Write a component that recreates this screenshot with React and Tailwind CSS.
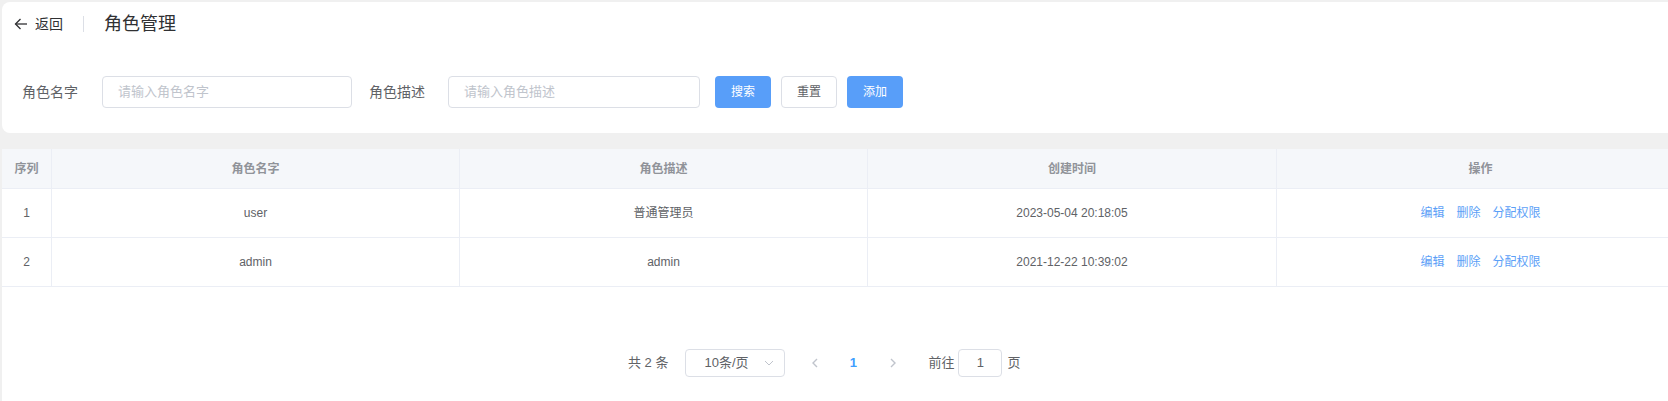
import React from "react";

const rows = [
  { id: 1, name: "user", desc: "普通管理员", time: "2023-05-04 20:18:05" },
  { id: 2, name: "admin", desc: "admin", time: "2021-12-22 10:39:02" },
];

function Cell({ children, className = "" }) {
  return (
    <div className={"flex items-center justify-center border-r border-b border-[#ebeef5] " + className}>
      {children}
    </div>
  );
}

export default function App() {
  return (
    <div className="w-[1668px] h-[401px] overflow-hidden bg-[#f0f0f0] pl-[2px] pt-[2px] font-['Liberation_Sans','Noto_Sans_CJK_SC',sans-serif]">
      <div className="w-[1700px]">
        {/* Top card */}
        <div className="bg-white rounded-l-lg h-[131px] pl-[12px]">
          <div className="flex items-center h-[44px]">
            <div className="flex items-center text-[14px] text-[#303133]">
              <svg width="14" height="12" viewBox="0 0 14 12" className="mr-[7px]" fill="none" stroke="#303133" strokeWidth="1.3">
                <path d="M13 6H1.5" />
                <path d="M6.5 1L1.5 6l5 5" />
              </svg>
              <span>返回</span>
            </div>
            <div className="w-px h-[16px] bg-[#dcdfe6] mx-[20px]" />
            <div className="text-[18px] text-[#303133]">角色管理</div>
          </div>
          <div className="flex items-center mt-[30px] h-[32px] pl-[8px]">
            <span className="text-[14px] text-[#606266]">角色名字</span>
            <div className="ml-[24px] w-[250px] h-[32px] border border-[#dcdfe6] rounded flex items-center px-[15px] text-[13px] text-[#c0c4cc]">
              请输入角色名字
            </div>
            <span className="ml-[17px] text-[14px] text-[#606266]">角色描述</span>
            <div className="ml-[23px] w-[252px] h-[32px] border border-[#dcdfe6] rounded flex items-center px-[15px] text-[13px] text-[#c0c4cc]">
              请输入角色描述
            </div>
            <div className="ml-[15px] w-[56px] h-[32px] rounded bg-[#589ef9] text-white text-[12px] flex items-center justify-center">
              搜索
            </div>
            <div className="ml-[10px] w-[56px] h-[32px] rounded border border-[#dcdfe6] bg-white text-[#606266] text-[12px] flex items-center justify-center">
              重置
            </div>
            <div className="ml-[10px] w-[56px] h-[32px] rounded bg-[#589ef9] text-white text-[12px] flex items-center justify-center">
              添加
            </div>
          </div>
        </div>

        {/* Table area */}
        <div className="mt-[16px] bg-white h-[260px]">
          <div className="grid grid-cols-[50px_408px_408px_409px_408px] text-[12px]">
            {["序列", "角色名字", "角色描述", "创建时间", "操作"].map((h) => (
              <Cell key={h} className="h-[40px] bg-[#f5f7fa] text-[#909399] font-semibold">
                {h}
              </Cell>
            ))}
            {rows.map((r) => (
              <React.Fragment key={r.id}>
                <Cell className="h-[49px] text-[#606266]">{r.id}</Cell>
                <Cell className="h-[49px] text-[#606266]">{r.name}</Cell>
                <Cell className="h-[49px] text-[#606266]">{r.desc}</Cell>
                <Cell className="h-[49px] text-[#606266]">{r.time}</Cell>
                <Cell className="h-[49px] text-[#5c9ff7] gap-[12px]">
                  <span>编辑</span>
                  <span>删除</span>
                  <span>分配权限</span>
                </Cell>
              </React.Fragment>
            ))}
          </div>

          {/* Pagination */}
          <div className="flex items-center h-[28px] mt-[62px] pl-[626px] text-[13px] text-[#606266]">
            <span>共 2 条</span>
            <div className="ml-[17px] w-[100px] h-[28px] border border-[#dcdfe6] rounded flex items-center pl-[18px] pr-[10px]">
              <span className="flex-1">10条/页</span>
              <svg width="10" height="6" viewBox="0 0 10 6" fill="none" stroke="#c0c4cc" strokeWidth="1">
                <path d="M1 1l4 4 4-4" />
              </svg>
            </div>
            <div className="ml-[15px] w-[30px] h-[28px] flex items-center justify-center">
              <svg width="6" height="10" viewBox="0 0 6 10" fill="none" stroke="#c0c4cc" strokeWidth="1.4">
                <path d="M5 1L1 5l4 4" />
              </svg>
            </div>
            <div className="ml-[8px] w-[30px] h-[28px] flex items-center justify-center text-[#409eff] font-bold">1</div>
            <div className="ml-[10px] w-[30px] h-[28px] flex items-center justify-center">
              <svg width="6" height="10" viewBox="0 0 6 10" fill="none" stroke="#c0c4cc" strokeWidth="1.4">
                <path d="M1 1l4 4-4 4" />
              </svg>
            </div>
            <span className="ml-[20px]">前往</span>
            <div className="ml-[4px] w-[44px] h-[28px] border border-[#dcdfe6] rounded flex items-center justify-center">1</div>
            <span className="ml-[5px]">页</span>
          </div>
        </div>
      </div>
    </div>
  );
}
